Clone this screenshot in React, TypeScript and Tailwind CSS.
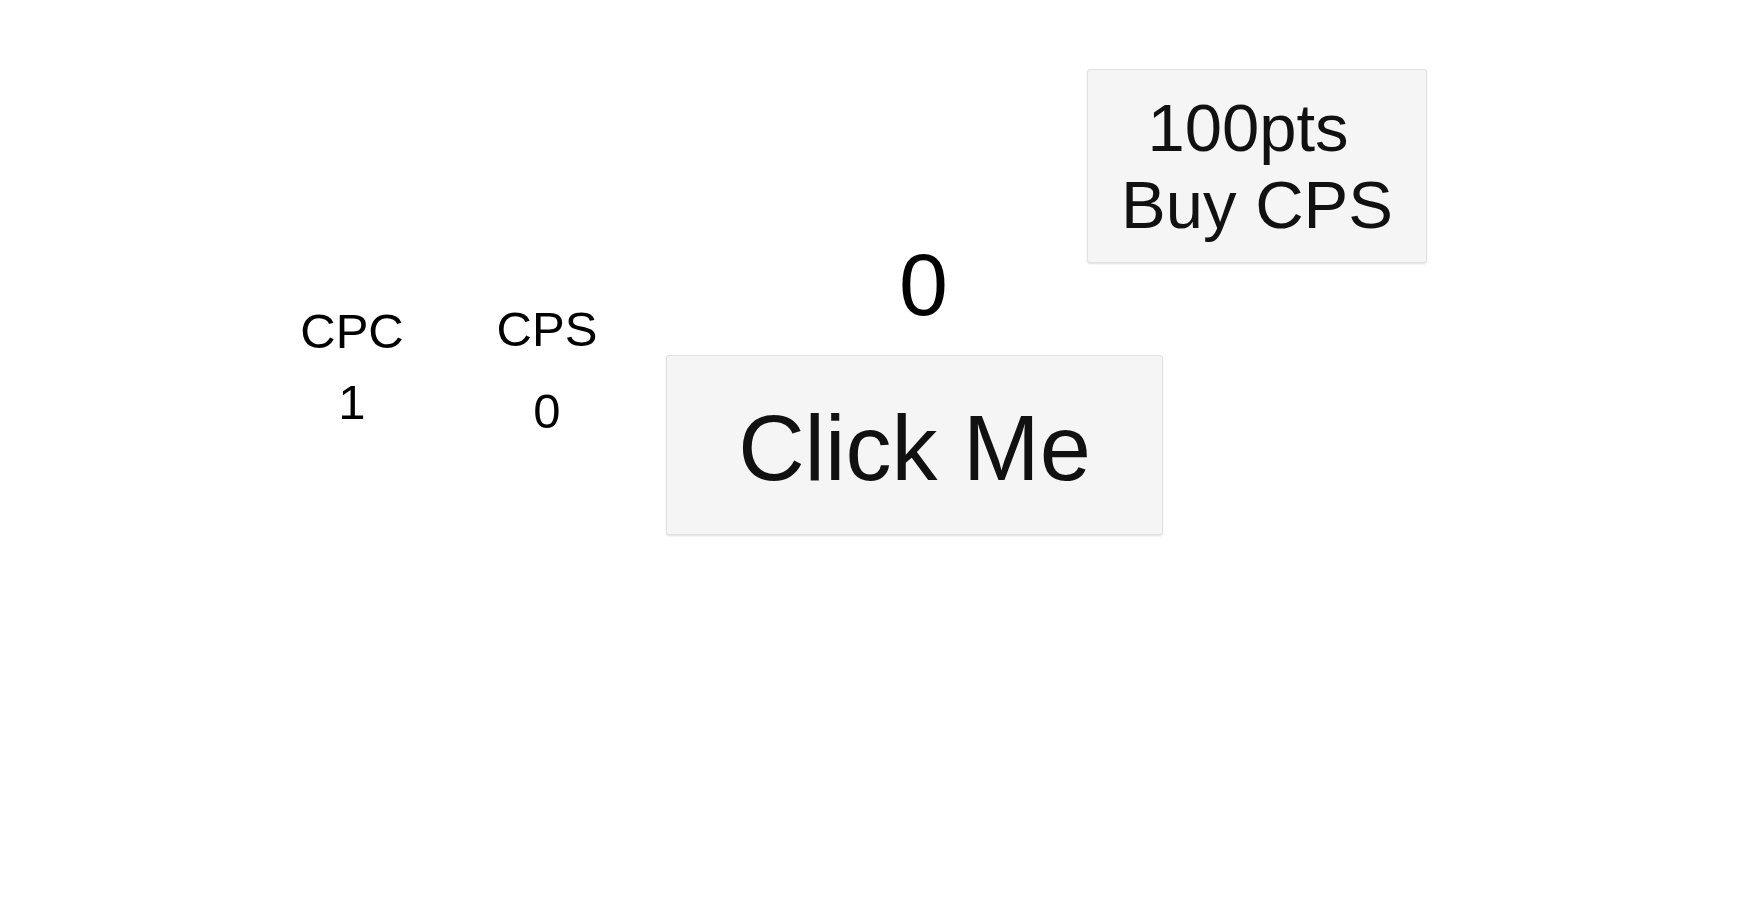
import { useState, useEffect } from 'react';

export default function App() {
  const [points, setPoints] = useState(0);
  const [cpc] = useState(1);
  const [cps, setCps] = useState(0);

  useEffect(() => {
    if (cps === 0) return;
    const id = setInterval(() => setPoints((p) => p + cps), 1000);
    return () => clearInterval(id);
  }, [cps]);

  const buyCps = () => {
    if (points < 100) return;
    setPoints((p) => p - 100);
    setCps((c) => c + 1);
  };

  return (
    <div className="min-h-screen bg-white text-black font-['Liberation_Sans',Arial,sans-serif]">
      <div className="flex items-start pl-[252px] pt-[69px]">
        {/* stats */}
        <div className="w-[200px] mt-[234px] text-center text-[49px] leading-[1.15]">
          <div>CPC</div>
          <div className="mt-[15px]">{cpc}</div>
        </div>
        <div className="w-[190px] mt-[232px] text-center text-[49px] leading-[1.15]">
          <div>CPS</div>
          <div className="mt-[26px]">{cps}</div>
        </div>

        {/* score + main button */}
        <div className="ml-[24px] mt-[165px] flex flex-col items-center">
          <div className="pl-[18px] text-[88px] leading-[1.15]">{points}</div>
          <button
            onClick={() => setPoints((p) => p + cpc)}
            className="mt-[20px] w-[497px] h-[180px] flex items-center justify-center pt-[8px] bg-[#f5f5f5] border border-[#e2e2e2] rounded-[3px] shadow-[0_1px_2px_rgba(0,0,0,0.12)] text-[92px] leading-[1.15] text-[#111]"
          >
            Click Me
          </button>
        </div>

        {/* shop */}
        <button
          onClick={buyCps}
          className="ml-[-76px] w-[340px] h-[194px] flex flex-col items-center justify-center bg-[#f5f5f5] border border-[#e2e2e2] rounded-[3px] shadow-[0_1px_2px_rgba(0,0,0,0.12)] text-[67px] leading-[1.15] text-[#111]"
        >
          <span className="block pr-[18px]">100pts</span>
          <span className="block">Buy CPS</span>
        </button>
      </div>
    </div>
  );
}
